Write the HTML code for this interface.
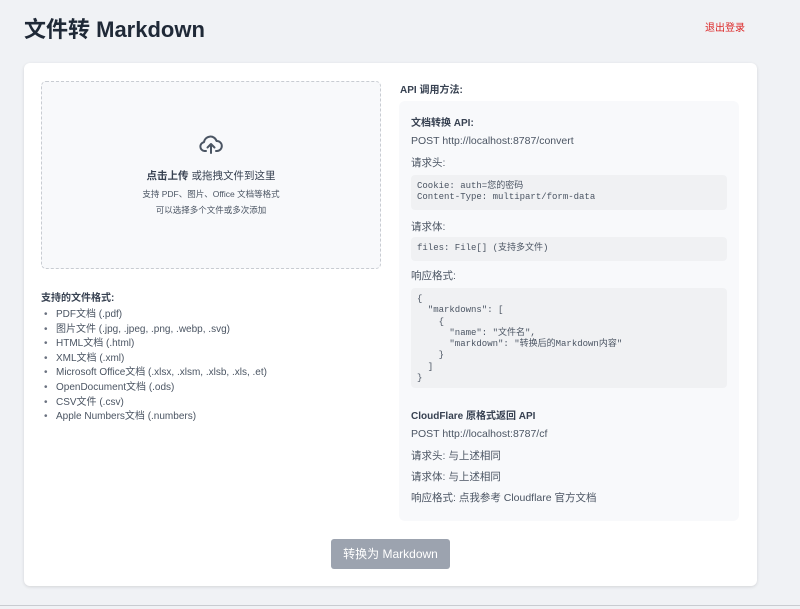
<!DOCTYPE html>
<html><head><meta charset="utf-8"><style>
*{margin:0;padding:0;box-sizing:border-box}
body{width:800px;height:609px;background:#f0f2f5;font-family:"Liberation Sans","Noto Sans CJK SC",sans-serif;color:#374151;position:relative;overflow:hidden}
.a{position:absolute;white-space:nowrap}
h1{position:absolute;left:24px;top:12px;font-size:22px;font-weight:bold;color:#1f2937}
.card{position:absolute;left:24px;top:63px;width:733px;height:523px;background:#fff;border-radius:6px;box-shadow:0 1px 3px rgba(0,0,0,.12)}
.drop{position:absolute;left:41px;top:81px;width:340px;height:188px;border:1px dashed #c8ccd2;border-radius:5px;background:#f8f9fb}
.gbox{position:absolute;left:399px;top:101px;width:340px;height:420px;background:#f8f9fb;border-radius:6px}
.code{position:absolute;left:411px;width:316px;background:#f0f1f3;border-radius:4px;font-family:"Liberation Mono","Noto Sans CJK SC",monospace;font-size:9px;color:#4b5563;padding:6px 6px;line-height:11.3px;white-space:pre}
.t{font-size:10.5px;color:#4b5563}
.b{font-size:10px;font-weight:bold;color:#374151}
ul{position:absolute;left:44px;top:308px;list-style:none;font-size:10px;color:#4b5563;line-height:14.6px}
ul li:before{content:"•";display:inline-block;width:12px;color:#6b7280}
.btn{position:absolute;left:331px;top:539px;width:119px;height:30px;background:#9ca3af;border-radius:3px;color:#fff;font-size:12px;text-align:center;line-height:30px}
.bot{position:absolute;left:0;top:605px;width:800px;height:4px;border-top:1px solid #c9ccd1;background:#f0f2f5}
</style></head><body>
<h1>文件转 Markdown</h1>
<div class="a" style="left:705px;top:19px;font-size:10px;color:#dc2626">退出登录</div>
<div class="card"></div>
<div class="drop"></div>
<svg class="a" style="left:199px;top:133px" width="24" height="22" viewBox="0 0 24 22" fill="none" stroke="#4b5563" stroke-width="2" stroke-linecap="round" stroke-linejoin="round"><path d="M7 18H5.5A4.5 4.5 0 0 1 5 9.1 6.5 6.5 0 0 1 17.6 8 4.5 4.5 0 0 1 18 18h-1"/><path d="M12 20V11M8.5 14.5 12 11l3.5 3.5"/></svg>
<div class="a" style="left:41px;width:340px;text-align:center;top:168px;font-size:10.5px;color:#374151"><b>点击上传</b> 或拖拽文件到这里</div>
<div class="a" style="left:41px;width:340px;text-align:center;top:188px;font-size:8.5px;color:#4b5563">支持 PDF、图片、Office 文档等格式</div>
<div class="a" style="left:41px;width:340px;text-align:center;top:204px;font-size:8.5px;color:#4b5563">可以选择多个文件或多次添加</div>
<div class="a b" style="left:41px;top:289px">支持的文件格式:</div>
<ul>
<li>PDF文档 (.pdf)</li><li>图片文件 (.jpg, .jpeg, .png, .webp, .svg)</li><li>HTML文档 (.html)</li><li>XML文档 (.xml)</li><li>Microsoft Office文档 (.xlsx, .xlsm, .xlsb, .xls, .et)</li><li>OpenDocument文档 (.ods)</li><li>CSV文件 (.csv)</li><li>Apple Numbers文档 (.numbers)</li>
</ul>
<div class="a b" style="left:400px;top:81px">API 调用方法:</div>
<div class="gbox"></div>
<div class="a b" style="left:411px;top:114px">文档转换 API:</div>
<div class="a t" style="left:411px;top:135px">POST http://localhost:8787/convert</div>
<div class="a t" style="left:411px;top:155px">请求头:</div>
<div class="code" style="top:175px;height:35px">Cookie: auth=您的密码
Content-Type: multipart/form-data</div>
<div class="a t" style="left:411px;top:219px">请求体:</div>
<div class="code" style="top:237px;height:24px">files: File[] (支持多文件)</div>
<div class="a t" style="left:411px;top:268px">响应格式:</div>
<div class="code" style="top:288px;height:100px">{
  "markdowns": [
    {
      "name": "文件名",
      "markdown": "转换后的Markdown内容"
    }
  ]
}</div>
<div class="a b" style="left:411px;top:407px">CloudFlare 原格式返回 API</div>
<div class="a t" style="left:411px;top:428px">POST http://localhost:8787/cf</div>
<div class="a t" style="left:411px;top:448px">请求头: 与上述相同</div>
<div class="a t" style="left:411px;top:469px">请求体: 与上述相同</div>
<div class="a t" style="left:411px;top:490px">响应格式: 点我参考 Cloudflare 官方文档</div>
<div class="btn">转换为 Markdown</div>
<div class="bot"></div>
</body></html>
